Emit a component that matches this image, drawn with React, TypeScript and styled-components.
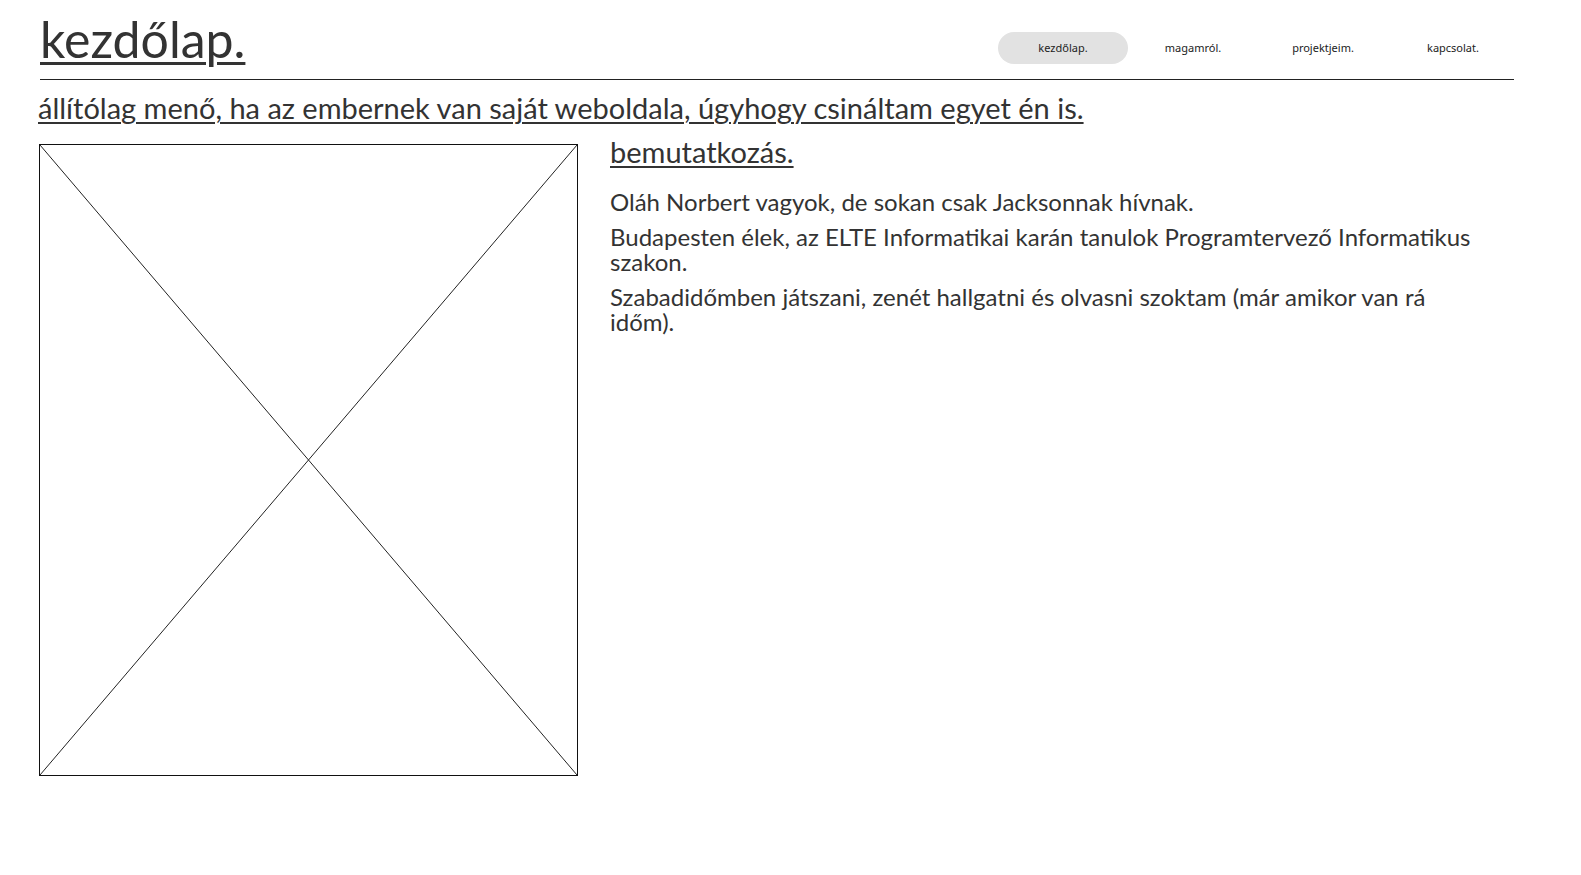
import React from 'react';
import styled, { createGlobalStyle } from 'styled-components';

const GlobalStyle = createGlobalStyle`
  html, body {
    margin: 0;
    padding: 0;
    background: #fff;
  }
  body {
    font-family: "Lato", "Open Sans", sans-serif;
    color: #333;
  }
`;

const Page = styled.div`
  padding: 0 67px 0 40px;
`;

const Header = styled.header`
  display: flex;
  justify-content: space-between;
  align-items: center;
  height: 79px;
  border-bottom: 1px solid #222;
`;

const Title = styled.a`
  font-size: 50px;
  line-height: 1;
  color: #333;
  text-decoration: underline;
  text-decoration-thickness: 3px;
  text-underline-offset: 4px;
  margin-top: -2px;
`;

const Nav = styled.nav`
  display: flex;
  align-self: flex-start;
  margin-top: 32px;
  margin-right: -4px;
`;

const NavItem = styled.a<{ $active?: boolean }>`
  width: 130px;
  height: 32px;
  padding-bottom: 2px;
  box-sizing: border-box;
  display: flex;
  align-items: center;
  justify-content: center;
  font-family: "Noto Sans", sans-serif;
  font-size: 11px;
  color: #222;
  border-radius: 16px;
  background: ${(p) => (p.$active ? '#e2e2e2' : 'transparent')};
`;

const Tagline = styled.h2`
  margin: 11px 0 0 -2px;
  font-size: 29px;
  font-weight: 400;
  line-height: 1.2;
  text-decoration: underline;
  text-decoration-thickness: 2px;
  text-underline-offset: 3px;
`;

const Content = styled.main`
  display: flex;
  gap: 32px;
  margin-top: 18px;
`;

const Placeholder = styled.div`
  flex: 0 0 auto;
  width: 539px;
  height: 632px;
  margin-left: -1px;
  box-sizing: border-box;
  border: 1px solid #111;
  svg {
    display: block;
    width: 100%;
    height: 100%;
  }
`;

const About = styled.section`
  flex: 1;
  padding-right: 40px;
`;

const SectionTitle = styled.h3`
  margin: -9px 0 19px;
  font-size: 29px;
  font-weight: 400;
  line-height: 1.2;
  text-decoration: underline;
  text-decoration-thickness: 2px;
  text-underline-offset: 3px;
`;

const Paragraph = styled.p`
  margin: 0 0 10px;
  font-size: 24px;
  line-height: 25px;
`;

export default function App() {
  const links = ['kezdőlap.', 'magamról.', 'projektjeim.', 'kapcsolat.'];
  return (
    <>
      <GlobalStyle />
      <Page>
        <Header>
          <Title>kezdőlap.</Title>
          <Nav>
            {links.map((l, i) => (
              <NavItem key={l} $active={i === 0}>
                {l}
              </NavItem>
            ))}
          </Nav>
        </Header>
        <Tagline>állítólag menő, ha az embernek van saját weboldala, úgyhogy csináltam egyet én is.</Tagline>
        <Content>
          <Placeholder>
            <svg viewBox="0 0 537 630" preserveAspectRatio="none">
              <line x1="0" y1="0" x2="537" y2="630" stroke="#222" strokeWidth="1" />
              <line x1="537" y1="0" x2="0" y2="630" stroke="#222" strokeWidth="1" />
            </svg>
          </Placeholder>
          <About>
            <SectionTitle>bemutatkozás.</SectionTitle>
            <Paragraph>Oláh Norbert vagyok, de sokan csak Jacksonnak hívnak.</Paragraph>
            <Paragraph>
              Budapesten élek, az ELTE Informatikai karán tanulok Programtervező Informatikus szakon.
            </Paragraph>
            <Paragraph>
              Szabadidőmben játszani, zenét hallgatni és olvasni szoktam (már amikor van rá időm).
            </Paragraph>
          </About>
        </Content>
      </Page>
    </>
  );
}
